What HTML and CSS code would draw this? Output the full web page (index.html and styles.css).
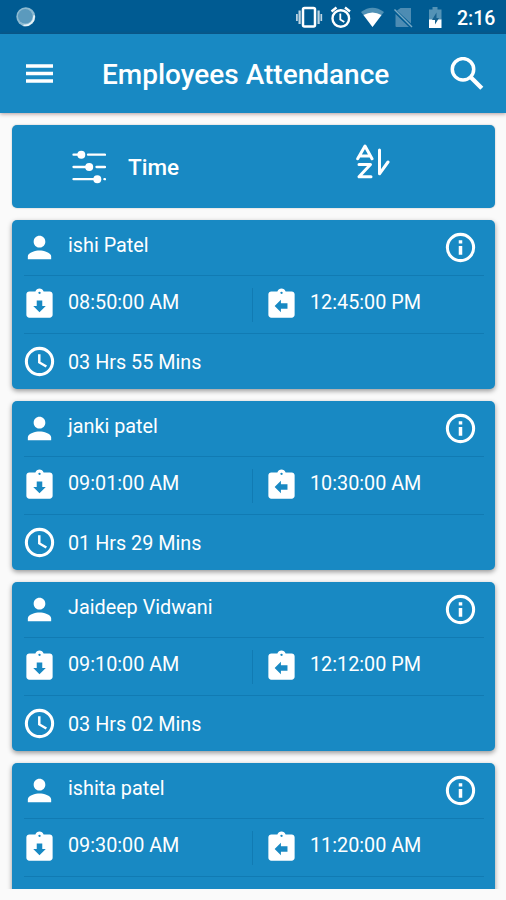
FILE: index.html
```html
<!DOCTYPE html>
<html lang="en">
<head>
    <meta charset="UTF-8">
    <meta name="viewport" content="width=device-width, initial-scale=1.0">
    <title>Employees Attendance</title>
    <link rel="stylesheet" href="styles.css">
</head>

<body>
    <!-- Shared icons -->
    <svg class="icon-defs" width="0" height="0">
        <symbol id="person" viewBox="0 0 24 24"><path d="M12 12c2.210 0 4-1.790 4-4s-1.790-4-4-4-4 1.790-4 4 1.790 4 4 4zm0 2c-2.670 0-8 1.340-8 4v2h16v-2c0-2.660-5.330-4-8-4z"/></symbol>
        <symbol id="info" viewBox="0 0 24 24"><circle cx="12" cy="12" r="9" fill="none" stroke="#fff" stroke-width="2.100"/><path d="M10.800 17h2.400v-6h-2.400zM10.800 9.300h2.400V7h-2.400z"/></symbol>
        <symbol id="clock" viewBox="0 0 24 24"><circle cx="12" cy="12" r="9" fill="none" stroke="#fff" stroke-width="2.100"/><path d="M12.700 7H11v6l5.250 3.150.9-1.400-4.450-2.600z"/></symbol>
        <symbol id="check-in" viewBox="0 0 24 24"><path fill-rule="evenodd" d="M19 3h-4.180C14.400 1.840 13.300 1 12 1s-2.400.84-2.820 2H5c-1.100 0-2 .9-2 2v14c0 1.100.9 2 2 2h14c1.100 0 2-.9 2-2V5c0-1.100-.9-2-2-2zM12 3.200a.8.8 0 1 1 0 1.600.8.8 0 0 1 0-1.600zM12 17.300l-4.300-4.300h2.400V9.300h3.800V13h2.400z"/></symbol>
        <symbol id="check-out" viewBox="0 0 24 24"><path fill-rule="evenodd" d="M19 3h-4.180C14.400 1.840 13.300 1 12 1s-2.400.84-2.820 2H5c-1.100 0-2 .9-2 2v14c0 1.100.9 2 2 2h14c1.100 0 2-.9 2-2V5c0-1.100-.9-2-2-2zM12 3.200a.8.8 0 1 1 0 1.600.8.8 0 0 1 0-1.600zM7.300 13l4.300-4.300v2.400h4.500v3.800h-4.500v2.400z"/></symbol>
    </svg>

    <div class="status-bar">
        <svg class="sync" width="20" height="20" viewBox="0 0 20 20">
            <circle cx="9.800" cy="9.800" r="9.500" fill="#8dbad1"/>
            <circle cx="9.300" cy="9.300" r="7.300" fill="#5b9abd"/>
            <path d="M18 8.300a9 9 0 0 1-10.500 10" fill="none" stroke="#e6f3f8" stroke-width="1.800"/>
        </svg>
        <svg class="status-icons" width="150" height="24" viewBox="0 0 150 24">
            <!-- vibrate -->
            <rect x="7" y="3" width="12" height="18.500" rx="1.500" fill="none" stroke="#fff" stroke-width="2.500"/>
            <path d="M3.600 5.500v13.500M22.600 5.500v13.500" stroke="#fff" stroke-width="2.200" opacity=".75"/>
            <path d="M.9 9v7M25.300 9v7" stroke="#fff" stroke-width="1.700" opacity=".75"/>
            <!-- alarm -->
            <circle cx="44.800" cy="13.500" r="8.300" fill="none" stroke="#fff" stroke-width="2.400"/>
            <path d="M35.500 6.500l5-4M49 2.500l5 4" stroke="#fff" stroke-width="2.400"/>
            <path d="M44.300 8.500v6l4 2.500" fill="none" stroke="#fff" stroke-width="1.800"/>
            <!-- wifi -->
            <path d="M65 7Q76.500 -1.500 88 7L76.500 22z" fill="#4f90b5"/>
            <path d="M67.500 10Q76.500 5 85.500 10L76.500 22z" fill="#fff"/>
            <!-- no sim -->
            <path d="M104.500 3h10.500v15.500L101 5.500zM99.500 9l13.500 13h-12.500a1 1 0 0 1-1-1z" fill="#4d8cb3"/>
            <path d="M98.500 4.500l17.500 17.500" stroke="#77a9c5" stroke-width="1.500"/>
            <!-- battery -->
            <path d="M136.500 2h5v2.500h4V15h-12.500V4.500h3.500z" fill="#5493b6"/>
            <path d="M133 14.500h12.500V23H133z" fill="#fff"/>
            <path d="M140.500 7.500l-4.500 7.500h3v4.500l4-6.500h-2.500z" fill="#17628f"/>
        </svg>
        <span class="time">2:16</span>
    </div>

    <div class="header">
        <svg class="menu" width="27" height="20" viewBox="0 0 27 20">
            <path d="M0 2h27M0 9.500h27M0 17h27" stroke="#fff" stroke-width="3.300"/>
        </svg>
        <h1>Employees Attendance</h1>
        <svg class="search" width="34" height="34" viewBox="0 0 34 34">
            <circle cx="13" cy="12.300" r="10.700" fill="none" stroke="#fff" stroke-width="3.500"/>
            <path d="M20.500 20l11.300 11.300" stroke="#fff" stroke-width="4.300"/>
        </svg>
    </div>

    <div class="filter">
        <div class="filter-item">
            <svg width="34" height="34" viewBox="0 0 34 34">
                <path d="M1.500 4.700h8M16 4.700h17M1.500 17h16M24.500 17h8.500M1.500 29.200h24M32.400 29.200h.6" stroke="#fff" stroke-width="2.300" stroke-linecap="round"/>
                <circle cx="9.300" cy="4.700" r="4" fill="#fff"/>
                <circle cx="17.200" cy="17" r="4" fill="#fff"/>
                <circle cx="25.300" cy="29.200" r="4" fill="#fff"/>
            </svg>
            <span>Time</span>
        </div>
        <div class="filter-item sort">
            <svg width="34" height="36" viewBox="0 0 34 36" fill="none" stroke="#fff" stroke-width="3" stroke-linecap="round" stroke-linejoin="round">
                <path d="M1.700 14.800L9 2l7 12.800M4.800 12h8.400"/>
                <path d="M3 20.500h11.500L3 32.800h12"/>
                <path d="M23.500 6V29.800l8.500-11.800"/>
            </svg>
        </div>
    </div>

    <div class="list">
        <div class="card">
            <div class="row name">
                <svg class="icon"><use href="#person"/></svg>
                <span>ishi Patel</span>
                <svg class="icon info"><use href="#info"/></svg>
            </div>
            <div class="row times">
                <div class="in"><svg class="icon board"><use href="#check-in"/></svg><span>08:50:00 AM</span></div>
                <div class="out"><svg class="icon board"><use href="#check-out"/></svg><span>12:45:00 PM</span></div>
            </div>
            <div class="row total">
                <svg class="icon"><use href="#clock"/></svg>
                <span>03 Hrs 55 Mins</span>
            </div>
        </div>

        <div class="card">
            <div class="row name">
                <svg class="icon"><use href="#person"/></svg>
                <span>janki patel</span>
                <svg class="icon info"><use href="#info"/></svg>
            </div>
            <div class="row times">
                <div class="in"><svg class="icon board"><use href="#check-in"/></svg><span>09:01:00 AM</span></div>
                <div class="out"><svg class="icon board"><use href="#check-out"/></svg><span>10:30:00 AM</span></div>
            </div>
            <div class="row total">
                <svg class="icon"><use href="#clock"/></svg>
                <span>01 Hrs 29 Mins</span>
            </div>
        </div>

        <div class="card">
            <div class="row name">
                <svg class="icon"><use href="#person"/></svg>
                <span>Jaideep Vidwani</span>
                <svg class="icon info"><use href="#info"/></svg>
            </div>
            <div class="row times">
                <div class="in"><svg class="icon board"><use href="#check-in"/></svg><span>09:10:00 AM</span></div>
                <div class="out"><svg class="icon board"><use href="#check-out"/></svg><span>12:12:00 PM</span></div>
            </div>
            <div class="row total">
                <svg class="icon"><use href="#clock"/></svg>
                <span>03 Hrs 02 Mins</span>
            </div>
        </div>

        <!-- Last card is cut off by the end of the list -->
        <div class="card">
            <div class="row name">
                <svg class="icon"><use href="#person"/></svg>
                <span>ishita patel</span>
                <svg class="icon info"><use href="#info"/></svg>
            </div>
            <div class="row times">
                <div class="in"><svg class="icon board"><use href="#check-in"/></svg><span>09:30:00 AM</span></div>
                <div class="out"><svg class="icon board"><use href="#check-out"/></svg><span>11:20:00 AM</span></div>
            </div>
            <div class="row total"></div>
        </div>
    </div>
</body>
</html>
```
FILE: styles.css
```css
body {
    margin: 0;
    height: 900px;
    overflow: hidden;
    background-color: #fafafa;
    color: white;
    font-family: Roboto, sans-serif;
}

svg {
    display: block;
    flex-shrink: 0;
}

.icon-defs {
    position: absolute;
}

.status-bar {
    display: flex;
    align-items: center;
    height: 34px;
    padding: 0 11px 0 16px;
    background-color: #005b92;
}

.status-icons {
    margin-left: auto;
}

.time {
    width: 38px;
    margin-left: 11px;
    padding-top: 2px;
    font-size: 19.5px;
    font-weight: 500;
    white-space: nowrap;
}

.header {
    display: flex;
    align-items: center;
    height: 79px;
    padding: 0 22px 0 26px;
    background-color: #1889c3;
    box-shadow: 0 1px 4px rgba(90, 40, 40, 0.45);
}

.menu {
    margin-right: 49px;
}

h1 {
    margin: 2px 0 0;
    font-size: 28px;
    font-weight: 500;
    white-space: nowrap;
}

.search {
    margin-left: auto;
}

.filter {
    display: grid;
    grid-template-columns: 1fr 1fr;
    height: 83px;
    margin: 12px 11px 0 12px;
    border-radius: 5px;
    background-color: #1889c3;
    box-shadow: 0 0 2px rgba(0, 0, 0, 0.25);
}

.filter-item {
    display: flex;
    align-items: center;
    padding-left: 60px;
    font-size: 22.5px;
    font-weight: 500;
}

.filter-item span {
    margin-left: 22px;
}

.filter-item.sort {
    padding: 0 0 10px 102px;
}

.list {
    height: 680.5px;
    overflow: hidden;
}

.card {
    height: 169px;
    margin: 12px 11px 0 12px;
    padding: 0 11px 0 12px;
    box-sizing: border-box;
    border-radius: 5px;
    background-color: #1889c3;
    box-shadow: 0 2px 5px rgba(0, 0, 0, 0.4);
    font-size: 19.8px;
}

.row {
    display: flex;
    align-items: center;
    box-sizing: border-box;
}

.row span {
    margin-left: 11px;
    white-space: nowrap;
}

.icon {
    width: 35px;
    height: 35px;
    margin-left: -2px;
    fill: white;
}

.name {
    height: 56px;
    border-bottom: 1px solid #117bb3;
}

.name span {
    padding-bottom: 4px;
}

.info {
    margin-left: auto;
    margin-right: 6px;
}

.times {
    height: 58px;
    border-bottom: 1px solid #117bb3;
}

.in,
.out {
    display: flex;
    align-items: center;
    height: 34px;
}

.in {
    width: 228px;
    border-right: 1px solid #117bb3;
}

.out {
    padding-left: 13px;
}

.times span {
    padding-bottom: 4px;
}

.total {
    height: 55px;
}

.total span {
    padding-top: 2px;
}
```
